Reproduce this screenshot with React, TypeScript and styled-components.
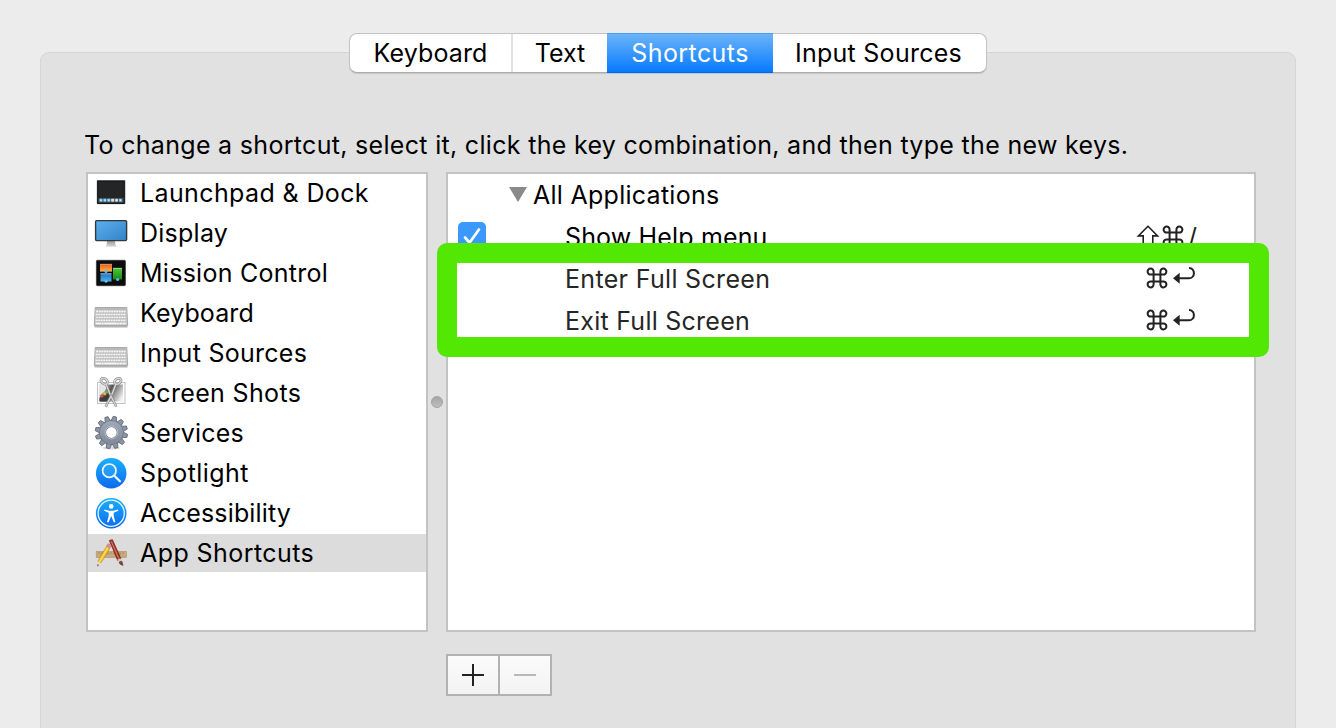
import React from 'react';
import styled, { createGlobalStyle } from 'styled-components';

const GlobalStyle = createGlobalStyle`
  * { box-sizing: border-box; }
  body {
    margin: 0;
    background: #ececec;
    color: #000;
    font-family: Inter, "Liberation Sans", sans-serif;
    font-size: 25px;
    overflow: hidden;
  }
`;

const Window = styled.div`
  height: 728px;
  padding: 52px 40px 0;
  overflow: hidden;
`;

const Pane = styled.section`
  height: 700px;
  padding: 0 39px 0 45px;
  border: 1px solid #d6d6d6;
  border-radius: 9px;
  background: #e1e1e1;
  display: flex;
  flex-direction: column;
`;

const TabBar = styled.nav`
  display: flex;
  width: 638px;
  height: 40px;
  margin: -20px 0 0 263px;
  border: 1px solid #c4c4c4;
  border-bottom-color: #adadad;
  border-radius: 8px;
  background: #fff;
  box-shadow: 0 1px 1px rgba(0, 0, 0, 0.12);
`;

const Tab = styled.div<{ $width: number; $active?: boolean; $divider?: boolean }>`
  width: ${p => p.$width}px;
  flex: none;
  display: flex;
  align-items: center;
  justify-content: center;
  border-right: ${p => (p.$divider ? '2px solid #e2e2e2' : 'none')};
  ${p => p.$active && `
    margin: -1px 0;
    color: #fff;
    background: linear-gradient(#6cb3fa, #067aff);
    border-top: 1px solid #4a9df5;
    border-bottom: 1px solid #0067f4;
  `}
`;

const Label = styled.span<{ $track?: number }>`
  letter-spacing: ${p => p.$track ?? 0}px;
  line-height: 32px;
  white-space: nowrap;
`;

const Instruction = styled.p`
  margin: 56px 0 11px -2px;
  height: 32px;
  line-height: 32px;
`;

const Columns = styled.div`
  display: flex;
  height: 460px;
`;

const Categories = styled.ul`
  width: 342px;
  flex: none;
  margin: 0;
  padding: 0;
  list-style: none;
  background: #fff;
  border: 2px solid #c3c3c3;
  display: flex;
  flex-direction: column;
  gap: 2px;
`;

const Category = styled.li<{ $selected?: boolean }>`
  height: 38px;
  flex: none;
  display: flex;
  align-items: center;
  gap: 12px;
  padding-left: 6px;
  background: ${p => (p.$selected ? '#dcdcdc' : 'transparent')};
`;

const Splitter = styled.div`
  width: 18px;
  flex: none;
  display: flex;
  align-items: center;
  justify-content: center;
`;

const Grip = styled.i`
  width: 12px;
  height: 12px;
  flex: none;
  border-radius: 50%;
  background: linear-gradient(#a6a6a6, #bdbdbd);
  border: 1px solid #a3a3a3;
`;

const Table = styled.div`
  position: relative;
  width: 810px;
  flex: none;
  background: #fff;
  border: 2px solid #c3c3c3;
`;

const TableRow = styled.div`
  height: 42px;
  display: flex;
  align-items: center;
`;

const CheckCell = styled.div`
  width: 61px;
  padding: 6px 0 0 10px;
  height: 42px;
`;

const NameCell = styled.div<{ $indent?: boolean; $muted?: boolean }>`
  flex: 1;
  display: flex;
  align-items: center;
  padding-left: ${p => (p.$indent ? 56 : 0)}px;
  gap: 6px;
  color: ${p => (p.$muted ? '#262626' : '#000')};
`;

const Keys = styled.div<{ $inset: number }>`
  display: flex;
  align-items: center;
  gap: 4px;
  padding-right: ${p => p.$inset}px;
  color: #222;
`;

const Glyph = styled.svg<{ $pull?: number }>`
  flex: none;
  overflow: visible;
  margin-bottom: 2px;
  margin-right: ${p => p.$pull ?? 0}px;
`;

const Highlight = styled.div`
  position: absolute;
  left: -11px;
  top: 69px;
  width: 832px;
  height: 114px;
  border: 20px solid #53e704;
  border-radius: 10px;
`;

const ButtonGroup = styled.div`
  display: flex;
  width: 106px;
  height: 42px;
  margin: 22px 0 0 360px;
  border: 2px solid #b2b2b2;
`;

const SquareButton = styled.button`
  flex: 1;
  padding: 0;
  border: 0;
  display: flex;
  align-items: center;
  justify-content: center;
  background: linear-gradient(#fbfbfb, #f3f3f3);
  & + & { border-left: 2px solid #b2b2b2; }
`;

const IconFrame = styled.svg`
  flex: none;
  overflow: visible;
`;

const Icon = ({ children }: { children: React.ReactNode }) => (
  <IconFrame width="34" height="38" viewBox="0 0 34 38">{children}</IconFrame>
);

const LaunchpadIcon = () => (
  <Icon>
    <rect x="2.7" y="5.9" width="28.8" height="24.4" rx="1" fill="#8fa0a8" />
    <rect x="3.7" y="7" width="26.6" height="22.4" fill="#252525" stroke="#101010" />
    <rect x="4.5" y="24" width="25" height="4.5" fill="#42545f" />
    {[5.4, 9.3, 13.2, 17.1, 21, 24.9].map((x, i) => (
      <rect key={x} x={x} y="24.7" width="3.1" height="3.1" rx="0.8" fill={i === 3 ? '#d8dde0' : i === 4 ? '#dbb' : '#75bdec'} />
    ))}
    {[6.4, 10.3, 14.2, 22, 25.9].map(x => <rect key={x} x={x} y="25.6" width="1.2" height="1.2" fill="#e8f6ff" />)}
  </Icon>
);

const DisplayIcon = () => (
  <Icon>
    <defs>
      <linearGradient id="screen" x1="0" y1="0" x2="1" y2="1">
        <stop stopColor="#5db0ee" /><stop offset="1" stopColor="#3182c9" />
      </linearGradient>
      <linearGradient id="stand" x1="0" y1="0" x2="0" y2="1">
        <stop stopColor="#9a9a9a" /><stop offset="1" stopColor="#dadada" />
      </linearGradient>
    </defs>
    <path d="M13 27h8l.5 4 1.3 1.8h-11L12.6 31z" fill="url(#stand)" />
    <rect x="1.6" y="6.6" width="31" height="20" rx="1" fill="url(#screen)" stroke="#34383b" strokeWidth="1.4" />
  </Icon>
);

const MissionIcon = () => (
  <Icon>
    <defs>
      <linearGradient id="orange" x1="0" y1="0" x2="0" y2="1"><stop stopColor="#e35c1d" /><stop offset="1" stopColor="#ffb24a" /></linearGradient>
      <linearGradient id="blue" x1="0" y1="0" x2="0" y2="1"><stop stopColor="#2470c6" /><stop offset="1" stopColor="#47b5e8" /></linearGradient>
      <linearGradient id="green" x1="0" y1="0" x2="0" y2="1"><stop stopColor="#4ecb31" /><stop offset="1" stopColor="#188a1e" /></linearGradient>
    </defs>
    <rect x="2.4" y="6.3" width="29" height="25.4" rx="1" fill="#0c0c0c" stroke="#303030" strokeWidth="0.7" />
    <rect x="6" y="10" width="12" height="7.6" fill="url(#orange)" /><path d="M6 10.3h12" stroke="#dca688" strokeWidth=".8" />
    <rect x="6.5" y="19.5" width="11" height="8" fill="url(#blue)" /><path d="M6.500 19.800h11" stroke="#b5d3e8" strokeWidth=".8" />
    <rect x="19" y="14" width="9" height="11.500" fill="url(#green)" /><path d="M19 14.300h9" stroke="#b9ddb2" strokeWidth=".8" />
    <circle cx="12" cy="17.600" r="1.500" fill="#62bdf4" /><circle cx="12" cy="27.200" r="1.500" fill="#62bdf4" /><circle cx="23.600" cy="25.500" r="1.500" fill="#62bdf4" />
  </Icon>
);

const KeyboardIcon = () => (
  <Icon>
    <path d="M.5 31.5h33v1.900h-33z" fill="#999" opacity=".75" />
    <path d="M1.2 13.500h31.600l.9 18H.3z" fill="#cbcbcb" stroke="#a4a4a4" strokeWidth=".9" />
    <path d="M1.6 14h30.800v2H1.500z" fill="#b8b8b8" />
    {[17.6, 20.5, 23.4, 26.3].map((y, i) => (
      <path key={y} d={`M${2.3 - (i % 2) * 0.5} ${y}H32`} stroke="#f8f8f8" strokeWidth="1.8" strokeDasharray="1.7 .8" />
    ))}
    <path d="M2 29.300h5m.6 0h2m.6 0h12.500m.6 0h2m.6 0h2m.6 0h3" stroke="#f6f6f6" strokeWidth="1.7" />
    <path d="M2 19.050h30M2 22h30M2 24.900h30M2 27.800h30" stroke="#aaa" strokeWidth=".6" />
  </Icon>
);

const scissors = (
  <>
    <ellipse cx="10.200" cy="7.200" rx="3.600" ry="2.500" transform="rotate(35 10.200 7.200)" />
    <ellipse cx="23.800" cy="7.200" rx="3.600" ry="2.500" transform="rotate(-35 23.800 7.200)" />
    <path d="M12 9.800L15.500 19l6.800 13.800M22 9.800L18.500 19l-6.800 13.800" />
  </>
);

const ScreenShotsIcon = () => (
  <Icon>
    <defs><linearGradient id="shot" x1="0" y1="0.3" x2="1" y2="0.700"><stop stopColor="#d5d5d5" /><stop offset=".4" stopColor="#555" /><stop offset="1" stopColor="#f2f2f2" /></linearGradient></defs>
    <rect x="3.500" y="8.500" width="27.500" height="21" fill="#fafafa" stroke="#c3c3c3" />
    <rect x="5.500" y="10.500" width="23.500" height="17" fill="url(#shot)" />
    <path d="M5.500 10.500h9l-4 7-5 4z" fill="#e4e4e4" />
    <path d="M5.500 27.500V24l8-7 4 3-5 7.500z" fill="#3c3c3c" />
    <circle cx="8" cy="22" r="1.600" fill="#dc5048" /><circle cx="10.800" cy="19.700" r="1.700" fill="#e0b83d" /><circle cx="13.300" cy="18" r="1.500" fill="#69ab4e" />
    <g fill="none" stroke="#858585" strokeWidth="2.600">{scissors}</g>
    <g fill="none" stroke="#d9d9d9" strokeWidth="1.300">{scissors}</g>
    <circle cx="17" cy="21" r=".8" fill="#777" />
  </Icon>
);

const ServicesIcon = () => (
  <Icon>
    <defs>
      <linearGradient id="gear" gradientUnits="userSpaceOnUse" x1="0" y1="-16" x2="0" y2="16"><stop stopColor="#a5afbf" /><stop offset="1" stopColor="#7b8391" /></linearGradient>
    </defs>
    <ellipse cx="17.500" cy="34" rx="9" ry="1.500" fill="#bbb" opacity=".6" />
    <g transform="translate(17.400 18.500)">
      {Array.from({ length: 12 }, (_, i) => (
        <path key={i} transform={`rotate(${i * 30 + 12})`} d="M-3-10.500L-1.600-16.200H1.600L3-10.500z" fill="#8c95a4" stroke="#5f6875" strokeWidth=".8" />
      ))}
      <circle r="8.700" fill="none" stroke="#616a78" strokeWidth="6.600" />
      <circle r="8.700" fill="none" stroke="url(#gear)" strokeWidth="5.600" />
      <circle r="6.400" fill="none" stroke="#c3c9d2" strokeWidth=".7" />
    </g>
  </Icon>
);

const BlueGradient = ({ id }: { id: string }) => (
  <defs><linearGradient id={id} x1="0" y1="0" x2="0" y2="1"><stop stopColor="#1bb0fd" /><stop offset="1" stopColor="#0c68ef" /></linearGradient></defs>
);

const SpotlightIcon = () => (
  <Icon>
    <BlueGradient id="spot" />
    <circle cx="17.200" cy="19.300" r="15.300" fill="url(#spot)" />
    <circle cx="15.300" cy="16.700" r="6.700" fill="#34a7fb" fillOpacity=".5" stroke="#eef8ff" strokeWidth="1.700" />
    <path d="M20.300 21.800l5.600 5.500" stroke="#eef8ff" strokeWidth="2.300" strokeLinecap="round" />
  </Icon>
);

const AccessibilityIcon = () => (
  <Icon>
    <BlueGradient id="access" />
    <circle cx="17.200" cy="19.300" r="15.300" fill="url(#access)" />
    <circle cx="17.200" cy="19.300" r="13.100" fill="none" stroke="#e8f6ff" strokeWidth="1.300" />
    <circle cx="17.200" cy="12.400" r="2.300" fill="#fff" />
    <path d="M10.400 15.500l4.700 1.300h4.200l4.700-1.300.3 1.300-4.600 2v3.200l1.700 6-1.500.5-2.700-6.500-2.700 6.500-1.500-.5 1.700-6v-3.200l-4.600-2z" fill="#fff" />
  </Icon>
);

const AppShortcutsIcon = () => (
  <Icon>
    <rect x="2.200" y="17.400" width="30.300" height="6.200" fill="#c7a880" stroke="#b5946a" strokeWidth=".6" />
    <path d="M5 18v2m3-2v3m3-3v2m3-2v3m3-3v2m3-2v3m3-3v2m3-2v3m3-3v2" stroke="#967650" strokeWidth=".6" />
    <path d="M15.400 6.500l3-.8L27 25l-3.300 1.400z" fill="#a83d28" stroke="#6c2018" strokeWidth=".8" />
    <path d="M17.300 7.500l7.500 17" stroke="#df8169" strokeWidth=".9" />
    <path d="M23.500 25.500l3-1.300 1.300 3-3 1.300z" fill="#c7c7c7" />
    <path d="M24.700 28l3-1.300c1.500 1.600 1.100 3.500 1.800 5.100-2-.2-4.200-1.200-4.800-3.800z" fill="#75492c" />
    <path d="M12.700 12.200l3.300 1.700L7 28.900l-3.200-1.700z" fill="#f6c52c" stroke="#b88418" strokeWidth=".6" />
    <path d="M14 13.400L5.500 27.800" stroke="#ffe98a" strokeWidth=".8" />
    <path d="M13.800 10c1-.8 3.800.5 3.300 1.900l-1.100 2-3.300-1.700z" fill="#e88a9e" stroke="#b96a78" strokeWidth=".5" />
    <path d="M3.800 27.200L7 28.900l-3.500 3.300z" fill="#efd9ad" /><path d="M3.600 30.300l-.2 2.200 1.600-1.600z" fill="#333" />
  </Icon>
);

const CommandKey = () => (
  <Glyph width="22" height="22" viewBox="0 0 22 22" fill="none" stroke="#222" strokeWidth="2">
    <path d="M7.600 7.600V4.700A3 3 0 1 0 4.600 7.600H17.400a3 3 0 1 0-3-2.900V17.300a3 3 0 1 0 3-2.900H4.600a3 3 0 1 0 3 2.900z" />
  </Glyph>
);

const ReturnKey = () => (
  <Glyph width="24" height="22" viewBox="0 0 24 22" fill="none">
    <path d="M7 11.300H16.800C23.600 11.300 23.600 1 17 1" stroke="#222" strokeWidth="2" />
    <path d="M1 11.300L7.700 5.800v11z" fill="#222" />
  </Glyph>
);

const ShiftKey = () => (
  <Glyph $pull={-2} width="24" height="22" viewBox="0 0 24 22" fill="none" stroke="#222" strokeWidth="1.600">
    <path d="M12 1.300L2.400 10.900H7.200V20.500H16.800V10.900H21.600z" />
  </Glyph>
);

const Check = () => (
  <svg width="28" height="28" viewBox="0 0 28 28">
    <rect width="28" height="28" rx="5" fill="#3b99fc" />
    <path d="M7 15.500l4.500 5.200L21 7.500" fill="none" stroke="#fff" strokeWidth="2.700" strokeLinecap="round" strokeLinejoin="round" />
  </svg>
);

const categories = [
  { name: 'Launchpad & Dock', icon: <LaunchpadIcon />, track: 0.38 },
  { name: 'Display', icon: <DisplayIcon />, track: 0.25 },
  { name: 'Mission Control', icon: <MissionIcon />, track: 0.27 },
  { name: 'Keyboard', icon: <KeyboardIcon />, track: 0.12 },
  { name: 'Input Sources', icon: <KeyboardIcon />, track: 0.27 },
  { name: 'Screen Shots', icon: <ScreenShotsIcon />, track: 0.33 },
  { name: 'Services', icon: <ServicesIcon />, track: 0.15 },
  { name: 'Spotlight', icon: <SpotlightIcon />, track: 0.45 },
  { name: 'Accessibility', icon: <AccessibilityIcon />, track: 0.15 },
  { name: 'App Shortcuts', icon: <AppShortcutsIcon />, track: 0.43 },
];

export default function App() {
  return (
    <Window>
      <GlobalStyle />
      <Pane>
        <TabBar>
          <Tab $width={163} $divider><Label $track={0.12}>Keyboard</Label></Tab>
          <Tab $width={94}><Label>Text</Label></Tab>
          <Tab $width={166} $active><Label $track={0.42}>Shortcuts</Label></Tab>
          <Tab $width={211}><Label $track={0.27}>Input Sources</Label></Tab>
        </TabBar>
        <Instruction>
          <Label $track={0.31}>To change a shortcut, select it, click the key combination, and then type the new keys.</Label>
        </Instruction>
        <Columns>
          <Categories>
            {categories.map(c => (
              <Category key={c.name} $selected={c.name === 'App Shortcuts'}>
                {c.icon}
                <Label $track={c.track}>{c.name}</Label>
              </Category>
            ))}
          </Categories>
          <Splitter><Grip /></Splitter>
          <Table>
            <TableRow>
              <CheckCell />
              <NameCell>
                <svg width="18" height="16" viewBox="0 0 18 16"><path d="M0 0h18L9 15z" fill="#8a8a8a" /></svg>
                <Label $track={0.27}>All Applications</Label>
              </NameCell>
            </TableRow>
            <TableRow>
              <CheckCell><Check /></CheckCell>
              <NameCell $indent><Label $track={0.15}>Show Help menu</Label></NameCell>
              <Keys $inset={57}><ShiftKey /><CommandKey /><Label>/</Label></Keys>
            </TableRow>
            <TableRow>
              <CheckCell />
              <NameCell $indent $muted><Label $track={0.32}>Enter Full Screen</Label></NameCell>
              <Keys $inset={58}><CommandKey /><ReturnKey /></Keys>
            </TableRow>
            <TableRow>
              <CheckCell />
              <NameCell $indent $muted><Label $track={0.25}>Exit Full Screen</Label></NameCell>
              <Keys $inset={58}><CommandKey /><ReturnKey /></Keys>
            </TableRow>
            <Highlight />
          </Table>
        </Columns>
        <ButtonGroup>
          <SquareButton aria-label="Add">
            <svg width="22" height="22" viewBox="0 0 22 22"><path d="M0 11h22M11 0v22" stroke="#222" strokeWidth="2" /></svg>
          </SquareButton>
          <SquareButton aria-label="Remove">
            <svg width="22" height="22" viewBox="0 0 22 22"><path d="M0 11h22" stroke="#b8b8b8" strokeWidth="2" /></svg>
          </SquareButton>
        </ButtonGroup>
      </Pane>
    </Window>
  );
}
